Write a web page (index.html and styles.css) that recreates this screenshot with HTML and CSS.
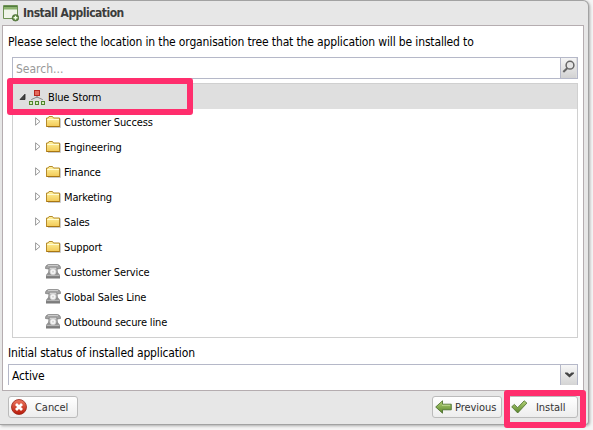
FILE: index.html
```html
<!DOCTYPE html>
<html lang="en">
<head>
<meta charset="utf-8">
<title>Install Application</title>
<link rel="stylesheet" href="styles.css">
</head>
<body>
<svg class="defs" width="0" height="0" aria-hidden="true">
  <defs>
    <linearGradient id="gold" x2="0" y2="1"><stop stop-color="#fff3a0"/><stop offset="1" stop-color="#f2c956"/></linearGradient>
    <linearGradient id="grey" x2="0" y2="1"><stop stop-color="#aaa"/><stop offset="1" stop-color="#777"/></linearGradient>
    <linearGradient id="green" x2="0" y2="1"><stop stop-color="#b5d477"/><stop offset="1" stop-color="#59842c"/></linearGradient>
    <linearGradient id="red" x2="0" y2="1"><stop stop-color="#ee7860"/><stop offset="1" stop-color="#b71908"/></linearGradient>
    <symbol id="folder" viewBox="0 0 16 14">
      <path d="M2 12.500h12.500V3.500" fill="none" stroke="#aaa" stroke-opacity=".6"/>
      <path d="M.5 11.500v-8.500h1.500l1-1.500h3.500l1 1.500h6v8.500z" fill="url(#gold)" stroke="#b58b2c"/>
      <path d="M1.200 4.500H13" stroke="#fffbd2"/>
      <path d="M.5 11.500h13.300" stroke="#a97611"/>
    </symbol>
    <symbol id="phone" viewBox="0 0 16 15">
      <path d="M3.500 4.500h9l.5 4 2 2.500v3.500H1V11l2-2.500z" fill="url(#grey)"/>
      <path d="M.5 4.500C.3 1.800 2 .7 4 .6h8c2 .1 3.700 1.200 3.500 3.900l-3.500.5-.5-1.700h-7L4 5z" fill="#a2a2a2" stroke="#777" stroke-width=".7"/>
      <path d="M3 1.600h10" stroke="#ddd" stroke-width=".8"/>
      <circle cx="8" cy="7.800" r="3" fill="#f4f4f4" stroke="#ccc" stroke-width=".7"/>
      <circle cx="8" cy="7.800" r="1" fill="#d4d4d4"/>
      <path d="M1.500 11.300h13" stroke="#d1d1d1" stroke-width=".8"/>
    </symbol>
    <symbol id="closed" viewBox="0 0 6 9"><path d="M.6.8v7.400l4.400-3.700z" fill="#fff" stroke="#8d8d8d" stroke-width=".9"/></symbol>
  </defs>
</svg>
<main class="window">
  <header class="titlebar">
    <svg class="app-icon" viewBox="0 0 16 17">
      <path d="M.5.500h14v13H.5z" fill="#f0f4ea" stroke="#6d9154"/>
      <path d="M1 1h13v3.500H1z" fill="#8db46f"/><path d="M1 1.500h13" stroke="#537b3f"/>
      <circle cx="12.500" cy="12.800" r="3.300" fill="#5b833f" stroke="#44672d" stroke-width=".6"/>
      <path d="M10.500 12.800h4m-2-2v4" stroke="#f0ffe3" stroke-width="1.400"/>
    </svg>
    <h1>Install Application</h1>
  </header>
  <section class="panel">
    <p class="intro">Please select the location in the organisation tree that the application will be installed to</p>
    <div class="search">
      <span class="placeholder">Search...</span>
      <span class="search-button"><svg width="15" height="15" viewBox="0 0 15 15"><circle cx="8" cy="5.200" r="3.900" fill="#e4e4e4" stroke="#666" stroke-width="1.500"/><path d="M5.200 8.200L1.300 12" stroke="#666" stroke-width="2"/></svg></span>
    </div>
    <div class="tree">
      <div class="row root">
        <svg class="open" viewBox="0 0 7 7"><path d="M1 6.500L6 1.200v5.300z" fill="#444" stroke="#222" stroke-width=".8"/></svg>
        <svg class="org" viewBox="0 0 16 16">
          <path d="M8 6v3M2.500 11V10.500L8 8l5.500 2.500V11" fill="none" stroke="#888"/>
          <rect x="5.500" y="1.500" width="5" height="5" fill="#e46b5c" stroke="#b72820"/>
          <g fill="#d4edb9" stroke="#50862d"><rect x=".5" y="12.500" width="3" height="3"/><rect x="6.500" y="12.500" width="3" height="3"/><rect x="12.500" y="12.500" width="3" height="3"/></g>
        </svg>
        <span class="name">Blue Storm</span>
        <i class="highlight highlight-root"></i>
      </div>
      <div class="row"><svg class="arrow"><use href="#closed"/></svg><svg class="folder"><use href="#folder"/></svg><span class="name">Customer Success</span></div>
      <div class="row"><svg class="arrow"><use href="#closed"/></svg><svg class="folder"><use href="#folder"/></svg><span class="name">Engineering</span></div>
      <div class="row"><svg class="arrow"><use href="#closed"/></svg><svg class="folder"><use href="#folder"/></svg><span class="name">Finance</span></div>
      <div class="row"><svg class="arrow"><use href="#closed"/></svg><svg class="folder"><use href="#folder"/></svg><span class="name">Marketing</span></div>
      <div class="row"><svg class="arrow"><use href="#closed"/></svg><svg class="folder"><use href="#folder"/></svg><span class="name">Sales</span></div>
      <div class="row"><svg class="arrow"><use href="#closed"/></svg><svg class="folder"><use href="#folder"/></svg><span class="name">Support</span></div>
      <div class="row leaf"><svg class="phone"><use href="#phone"/></svg><span class="name">Customer Service</span></div>
      <div class="row leaf"><svg class="phone"><use href="#phone"/></svg><span class="name">Global Sales Line</span></div>
      <div class="row leaf"><svg class="phone"><use href="#phone"/></svg><span class="name">Outbound secure line</span></div>
    </div>
    <p class="status-label">Initial status of installed application</p>
    <div class="select">
      <span>Active</span>
      <span class="select-button"><svg width="9" height="6" viewBox="0 0 9 6"><path d="M0 .5h2.500l2 1.700L6.500.5H9v1L4.500 5.500 0 1.500z" fill="#444"/></svg></span>
    </div>
  </section>
  <footer class="actions">
    <div class="button cancel">
      <svg width="16" height="16" viewBox="0 0 16 16"><circle cx="8" cy="8" r="7.500" fill="url(#red)" stroke="#982318" stroke-width=".8"/><path d="M5 5l6 6m0-6l-6 6" stroke="#fff" stroke-width="2.800"/></svg>
      <span>Cancel</span>
    </div>
    <div class="button previous">
      <svg width="17" height="14" viewBox="0 0 17 14"><path d="M.7 7L7.500.8v3.400h8.800v5.600H7.500v3.400z" fill="url(#green)" stroke="#426824" stroke-width=".8" stroke-linejoin="round"/><path d="M7 5.300h8" stroke="#c6df9c" stroke-width=".8"/></svg>
      <span>Previous</span>
    </div>
    <div class="button install">
      <svg width="17" height="14" viewBox="0 0 17 14"><path d="M.7 6.800l2.700-2.400 3.200 3.300L13.200.8l2.700 2.300-9.200 9.900z" fill="url(#green)" stroke="#496d2b" stroke-width=".8" stroke-linejoin="round"/></svg>
      <span>Install</span>
      <i class="highlight highlight-install"></i>
    </div>
  </footer>
</main>
</body>
</html>
```
FILE: styles.css
```css
* { box-sizing: border-box; }
body {
  margin: 0;
  height: 430px;
  overflow: hidden;
  background: #f5f5f5;
  color: #000;
  font: 12px/16px "DejaVu Sans Condensed", "DejaVu Sans", sans-serif;
  font-stretch: condensed;
  letter-spacing: -0.145px;
  white-space: nowrap;
}
.defs { position: absolute; }
svg { display: block; flex: none; }
p, h1 { margin: 0; }
.window {
  width: 589px;
  height: 425px;
  padding-left: 2px;
  background: #e7e7e7;
  border: 1px solid #a2a2a2;
  border-left: 0;
  border-radius: 0 6px 4px 0;
  box-shadow: 1px 1px 3px #aaa;
}
.titlebar {
  display: flex;
  height: 24px;
  padding: 4px 0 0 1px;
  gap: 4px;
}
.app-icon { width: 16px; height: 17px; }
h1 {
  font-size: 12px;
  line-height: 17px;
  color: #3c3c3c;
  letter-spacing: -0.52px;
}
.panel {
  width: 582px;
  height: 366px;
  padding: 7px 5px 0;
  border: 1px solid #b5adb0;
  background: #fff;
}
.intro { height: 24px; line-height: 18px; }
.search {
  display: flex;
  align-items: center;
  justify-content: space-between;
  width: 566px;
  height: 22px;
  margin-left: 4px;
  padding-left: 3px;
  border: 1px solid #b5b8c8;
  color: #999;
  letter-spacing: 0;
}
.placeholder { padding-top: 2px; }
.search-button {
  width: 17px;
  height: 20px;
  padding: 2px 0 0 1px;
  border-left: 1px solid #b5b8c8;
  border-right: 1px solid #ddd;
  background: linear-gradient(#f5f5f5, #d2d2d2);
}
.tree {
  width: 566px;
  height: 255px;
  margin: 4px 0 0 4px;
  border: 1px solid #d0d0d0;
  font-size: 11px;
  letter-spacing: -0.15px;
}
.row {
  display: flex;
  align-items: center;
  height: 25px;
  padding-left: 22px;
}
.row.root { position: relative; padding-left: 6px; background: #dfdfdf; }
.row.leaf { padding-left: 32px; }
.open { width: 7px; height: 7px; margin-right: 3px; }
.org { width: 16px; height: 16px; margin-right: 3px; }
.arrow { width: 6px; height: 9px; margin-right: 5px; }
.folder { width: 16px; height: 14px; margin-right: 2px; }
.phone { width: 16px; height: 15px; margin-right: 3px; }
.name { padding-top: 3px; }
.status-label { height: 26px; padding-top: 7px; }
.select {
  display: flex;
  align-items: center;
  justify-content: space-between;
  width: 570px;
  height: 21px;
  padding-left: 3px;
  border: 1px solid #b5b8c8;
  border-bottom: 0;
}
.select > span:first-child { padding-top: 2px; }
.select-button {
  display: flex;
  align-items: center;
  justify-content: center;
  width: 17px;
  height: 20px;
  border-left: 1px solid #b5b8c8;
  background: linear-gradient(#f7f7f7, #d4d4d4);
}
.actions {
  display: flex;
  padding: 5px 0 0 6px;
  font-size: 11px;
  letter-spacing: -0.05px;
}
.button {
  position: relative;
  display: flex;
  align-items: center;
  width: 70px;
  height: 22px;
  padding-left: 2px;
  border: 1px solid #bbb;
  border-radius: 3px;
  background: linear-gradient(#fff, #ededed);
  color: #333;
}
.button span { padding-top: 2px; }
.cancel { gap: 8px; }
.previous { margin-left: 354px; gap: 3px; }
.install { margin-left: 6px; gap: 8px; }
.highlight {
  position: absolute;
  border: 6px solid #ff2e6d;
  border-radius: 3px;
}
.highlight-root { left: -6px; top: -6px; width: 186px; height: 37px; }
.highlight-install { left: -5px; top: -7px; width: 82px; height: 38px; }
```
